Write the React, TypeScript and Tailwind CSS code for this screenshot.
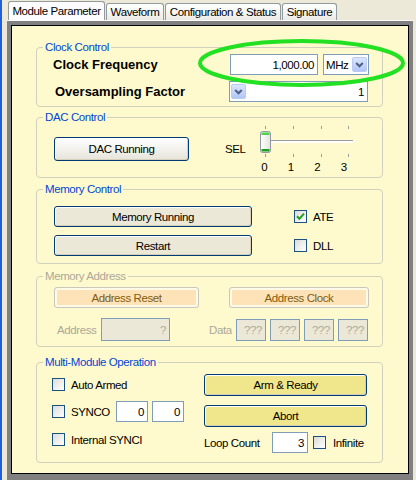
import type { ReactNode } from 'react'

type Tone = 'plain' | 'beige' | 'khaki'

const TONES: Record<Tone, string> = {
  plain: 'bg-linear-to-b from-white to-[#e6e4da]',
  beige: 'bg-[#ebe8d8]',
  khaki: 'bg-[#f0e68c]',
}

function Group({
  title,
  disabled = false,
  className = '',
  children,
}: {
  title: string
  disabled?: boolean
  className?: string
  children: ReactNode
}) {
  return (
    <div className={`relative ml-[24px] w-[347px] rounded-[4px] border border-[#d0d0bf] ${className}`}>
      <span
        className={`absolute top-[-8px] left-[6px] bg-[#fffacd] px-[2px] leading-[14px] ${
          disabled ? 'text-[#aca899]' : 'text-[#0046d5]'
        }`}
      >
        {title}
      </span>
      {children}
    </div>
  )
}

function CheckBox({ checked = false }: { checked?: boolean }) {
  return (
    <span className="flex h-[13px] w-[13px] shrink-0 items-center justify-center border border-[#1c5180] bg-linear-to-br from-[#dcdcd7] to-white">
      {checked && (
        <svg width="9" height="9" viewBox="0 0 9 9">
          <path d="M1 4.2 L3.4 6.8 L8 1.6" fill="none" stroke="#21a121" strokeWidth="2" />
        </svg>
      )}
    </span>
  )
}

function TextBox({ value, className = '', disabled = false }: { value: string; className?: string; disabled?: boolean }) {
  return (
    <div
      className={`flex shrink-0 items-center justify-end border border-[#7f9db9] pr-[3px] ${
        disabled ? 'bg-[#ebe8d7] text-[#aca899]' : 'bg-white'
      } ${className}`}
    >
      {value}
    </div>
  )
}

function DropButton() {
  return (
    <span className="flex h-[15px] w-[15px] shrink-0 items-center justify-center rounded-[2px] border border-[#b9cbf3] bg-linear-to-b from-[#dbe5fd] to-[#b1c6f6]">
      <svg width="9" height="6" viewBox="0 0 9 6">
        <path d="M1.2 1 L4.5 4.3 L7.8 1" fill="none" stroke="#4d6185" strokeWidth="2" />
      </svg>
    </span>
  )
}

function XpButton({ label, tone, className = '' }: { label: string; tone: Tone; className?: string }) {
  return (
    <button
      type="button"
      className={`flex shrink-0 items-center justify-center rounded-[3px] border border-[#003c74] shadow-[inset_1px_1px_0_#fff,inset_-1px_-1px_0_#d6d0bb] ${TONES[tone]} ${className}`}
    >
      {label}
    </button>
  )
}

function PeachButton({ label, className = '' }: { label: string; className?: string }) {
  return (
    <div
      className={`flex shrink-0 items-center justify-center rounded-[3px] border border-[#c9c7ba] bg-[#fee3b8] text-[#7f5c10] shadow-[inset_0_0_0_2px_#fffbe8] ${className}`}
    >
      {label}
    </div>
  )
}

function Slider() {
  const ticks = [8, 36, 64, 91]
  return (
    <div className="mt-[7px] w-[100px]">
      <svg width="100" height="34" viewBox="0 0 100 34">
        <defs>
          <linearGradient id="thumb" x1="0" y1="0" x2="1" y2="0">
            <stop offset="0" stopColor="#ffffff" />
            <stop offset="1" stopColor="#e4e4dc" />
          </linearGradient>
        </defs>
        {ticks.map((x) => (
          <g key={x} fill="#9c9c9c">
            <rect x={x} y={1} width={1} height={3} />
            <rect x={x} y={29} width={1} height={3} />
          </g>
        ))}
        <rect x={8} y={15} width={88} height={1} fill="#9d9d9d" />
        <rect x={8} y={16} width={88} height={2} fill="#ffffff" />
        <rect x={3.5} y={6.5} width={10} height={21} rx={2} fill="url(#thumb)" stroke="#8f9aa6" />
        <rect x={4.5} y={7.5} width={8} height={2.5} fill="#4fd14f" />
        <rect x={4.5} y={24} width={8} height={2.5} fill="#1f9e1f" />
      </svg>
      <div className="ml-[-6px] mt-[2px] flex leading-[12px]">
        {['0', '1', '2', '3'].map((n) => (
          <span key={n} className="w-[28px] text-center">
            {n}
          </span>
        ))}
      </div>
    </div>
  )
}

function TabStrip() {
  return (
    <div className="flex h-[20px] items-end pl-[6px]">
      <div className="flex h-[19px] w-[97px] items-center justify-center rounded-t-[3px] border border-b-0 border-[#919b9c] bg-[#fcfcfe] pb-[1px]">
        Module Parameter
      </div>
      <div className="ml-[1px] flex h-[17px] w-[58px] items-center justify-center rounded-t-[3px] border border-b-0 border-[#919b9c] bg-linear-to-b from-white to-[#ecebe6]">
        Waveform
      </div>
      <div className="ml-[1px] flex h-[17px] w-[116px] items-center justify-center rounded-t-[3px] border border-b-0 border-[#919b9c] bg-linear-to-b from-white to-[#ecebe6]">
        Configuration &amp; Status
      </div>
      <div className="ml-[1px] flex h-[17px] w-[55px] items-center justify-center rounded-t-[3px] border border-b-0 border-[#919b9c] bg-linear-to-b from-white to-[#ecebe6]">
        Signature
      </div>
    </div>
  )
}

export default function App() {
  return (
    <div className="relative flex h-[480px] w-[416px] overflow-hidden bg-[#ece9d8] font-['Liberation_Sans',Arial,sans-serif] text-[11.5px] leading-[14px] tracking-[-0.4px] text-black">
      <div className="w-[2px] shrink-0 bg-[#1f5fd8]" />
      <div className="flex min-w-0 flex-1 flex-col">
        <TabStrip />
        <div className="ml-[5px] mr-[3px] h-[1px] bg-[#fcfcfe]" />
        <div className="ml-[5px] mr-[3px] flex-1 border-x-[4px] border-t-[4px] border-[#808080] bg-[#808080]">
          <div className="h-[449px] border border-black bg-[#fffacd] pt-[21px]">
            <Group title="Clock Control" className="h-[60px] pt-[6px]">
              <div className="flex h-[21px] items-center pl-[16px] pr-[13px]">
                <span className="flex-1 text-[13px] font-bold tracking-normal">Clock Frequency</span>
                <TextBox value="1,000.00" className="h-[21px] w-[88px]" />
                <div className="ml-[5px] flex h-[21px] w-[46px] items-center border border-[#7f9db9] bg-white pl-[2px] pr-[1px]">
                  <span className="flex-1">MHz</span>
                  <DropButton />
                </div>
              </div>
              <div className="mt-[6px] flex h-[21px] items-center pl-[18px] pr-[14px]">
                <span className="flex-1 text-[13px] font-bold tracking-normal">Oversampling Factor</span>
                <div className="flex h-[21px] w-[139px] items-center border border-[#7f9db9] bg-white pl-[1px] pr-[3px]">
                  <DropButton />
                  <span className="flex-1 text-right">1</span>
                </div>
              </div>
            </Group>

            <Group title="DAC Control" className="mt-[10px] flex h-[61px] items-start pl-[17px]">
              <XpButton label="DAC Running" tone="plain" className="mt-[19px] h-[24px] w-[135px]" />
              <span className="ml-[36px] mt-[24px] w-[32px]">SEL</span>
              <Slider />
            </Group>

            <Group title="Memory Control" className="mt-[11px] h-[75px] pt-[16px]">
              <div className="flex h-[21px] items-center pl-[17px]">
                <XpButton label="Memory Running" tone="beige" className="h-[21px] w-[198px]" />
                <span className="ml-[42px]">
                  <CheckBox checked />
                </span>
                <span className="ml-[6px]">ATE</span>
              </div>
              <div className="mt-[8px] flex h-[21px] items-center pl-[17px]">
                <XpButton label="Restart" tone="beige" className="h-[21px] w-[198px]" />
                <span className="ml-[42px]">
                  <CheckBox />
                </span>
                <span className="ml-[6px]">DLL</span>
              </div>
            </Group>

            <Group title="Memory Address" disabled className="mt-[12px] h-[71px] pt-[10px]">
              <div className="flex h-[21px] items-center pl-[17px]">
                <PeachButton label="Address Reset" className="h-[21px] w-[145px]" />
                <PeachButton label="Address Clock" className="ml-[30px] h-[21px] w-[140px]" />
              </div>
              <div className="mt-[10px] flex h-[23px] items-center pl-[20px] text-[#aca899]">
                <span className="w-[44px]">Address</span>
                <TextBox value="?" disabled className="h-[23px] w-[69px]" />
                <span className="ml-[39px] w-[27px]">Data</span>
                <div className="flex gap-[4px]">
                  {[0, 1, 2, 3].map((i) => (
                    <TextBox key={i} value="???" disabled className="h-[22px] w-[30px] justify-center pr-0" />
                  ))}
                </div>
              </div>
            </Group>

            <Group title="Multi-Module Operation" className="mt-[15px] flex h-[101px]">
              <div className="w-[167px] pl-[15px] pt-[11px]">
                <div className="flex h-[21px] items-center">
                  <CheckBox />
                  <span className="ml-[6px]">Auto Armed</span>
                </div>
                <div className="mt-[6px] flex h-[21px] items-center">
                  <CheckBox />
                  <span className="ml-[6px] w-[45px]">SYNCO</span>
                  <TextBox value="0" className="h-[21px] w-[32px]" />
                  <TextBox value="0" className="ml-[4px] h-[21px] w-[32px]" />
                </div>
                <div className="mt-[7px] flex h-[21px] items-center">
                  <CheckBox />
                  <span className="ml-[6px]">Internal SYNCI</span>
                </div>
              </div>
              <div className="pt-[11px]">
                <XpButton label="Arm & Ready" tone="khaki" className="h-[22px] w-[163px]" />
                <XpButton label="Abort" tone="khaki" className="mt-[9px] h-[22px] w-[163px]" />
                <div className="mt-[5px] flex h-[21px] items-center">
                  <span className="w-[68px]">Loop Count</span>
                  <TextBox value="3" className="h-[21px] w-[36px]" />
                  <span className="ml-[5px]">
                    <CheckBox />
                  </span>
                  <span className="ml-[7px]">Infinite</span>
                </div>
              </div>
            </Group>
          </div>
        </div>
      </div>

      <svg className="pointer-events-none absolute left-[198px] top-[39px]" width="207" height="48" viewBox="0 0 207 48">
        <ellipse cx="103.5" cy="24" rx="101.5" ry="22" fill="none" stroke="#22e022" strokeWidth="4" />
      </svg>
    </div>
  )
}
